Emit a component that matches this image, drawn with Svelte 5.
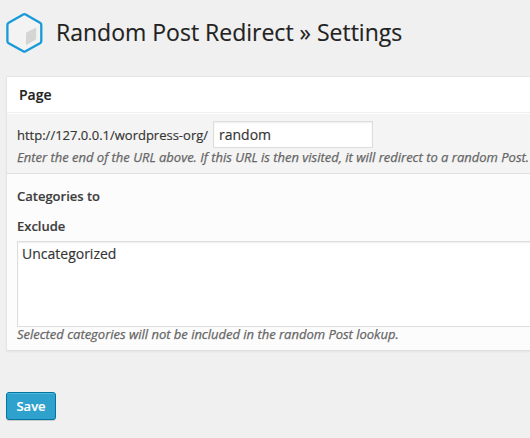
<script>
  let slug = $state('random');
  const categories = ['Uncategorized'];
</script>

<main>
  <header>
    <svg class="logo" width="38" height="42" viewBox="0 0 38 42" aria-hidden="true">
      <path d="M17.2 2.5 Q18.4 1.8 19.6 2.5 L34 10.8 Q35.3 11.5 35.3 13 V29 Q35.3 30.5 34 31.2 L19.6 39.3 Q18.4 40 17.2 39.3 L2.7 31.2 Q1.4 30.5 1.4 29 V13 Q1.4 11.5 2.7 10.8 Z" fill="#f3f3f3" stroke="#1899d9" stroke-width="2.3" />
      <path d="M30.2 15.6 V27.2 L20 33.2 V21.5 Q20 20.7 20.8 20.3 Z" fill="#d5d5d4" />
    </svg>
    <h1>Random Post Redirect » Settings</h1>
  </header>

  <section class="postbox">
    <h2>Page</h2>
    <div class="row url-row">
      <div class="field">
        <span class="url">http://127.0.0.1/wordpress-org/</span>
        <input type="text" bind:value={slug} spellcheck="false" />
      </div>
      <p class="description">Enter the end of the URL above. If this URL is then visited, it will redirect to a random Post.</p>
    </div>
    <div class="row cat-row">
      <div class="label"><span>Categories to</span><span>Exclude</span></div>
      <div class="list" role="listbox">
        {#each categories as category}
          <div role="option" aria-selected="false">{category}</div>
        {/each}
      </div>
      <p class="description hint">Selected categories will not be included in the random Post lookup.</p>
    </div>
  </section>

  <button type="button"><span>Save</span></button>
</main>

<style>
  :global(body) {
    margin: 0;
    background: #f0f0f0;
  }
  main {
    box-sizing: border-box;
    width: 530px;
    height: 438px;
    padding: 12px 0 0 6px;
    overflow: hidden;
    background: #f0f0f0;
    color: #333;
    font: 13px/18px "Open Sans", sans-serif;
    white-space: nowrap;
    -webkit-text-stroke: 0.15px currentColor;
  }
  header {
    display: flex;
    height: 64px;
  }
  .logo {
    flex: none;
  }
  h1 {
    margin: 4px 0 0 12px;
    color: #222;
    font-size: 23px;
    font-weight: 400;
    line-height: 32px;
  }
  .postbox {
    box-sizing: border-box;
    width: 540px;
    height: 275px;
    border: 1px solid #e5e5e5;
    border-bottom-color: #dfdfdf;
    background: #fcfcfc;
    box-shadow: 0 1px 2px rgba(0, 0, 0, 0.05);
  }
  h2 {
    box-sizing: border-box;
    height: 36px;
    margin: 0;
    padding: 8px 12px;
    border-bottom: 1px solid #eee;
    background: #fff;
    color: #222;
    font-size: 14px;
    font-weight: 600;
    line-height: 20px;
  }
  .row {
    box-sizing: border-box;
    padding-left: 10px;
  }
  .url-row {
    height: 61px;
    padding-top: 7px;
    border-top: 1px solid #fff;
    border-bottom: 1px solid #dfdfdf;
    background: #f4f4f4;
  }
  .field {
    display: flex;
    height: 27px;
    align-items: center;
  }
  .url {
    width: 196px;
    flex: none;
  }
  input {
    box-sizing: border-box;
    width: 160px;
    height: 27px;
    margin: 0;
    padding: 0 5px;
    border: 1px solid #ddd;
    border-radius: 0;
    outline: 0;
    background: #fff;
    box-shadow: inset 0 1px 2px rgba(0, 0, 0, 0.07);
    color: #333;
    font: 14px/20px "Open Sans", sans-serif;
  }
  .description {
    margin: 0;
    color: #666;
    font-style: italic;
    letter-spacing: -0.008px;
    -webkit-text-stroke-width: 0.25px;
  }
  .hint {
    line-height: 14px;
    letter-spacing: -0.015px;
  }
  .cat-row {
    padding-top: 7px;
  }
  .label {
    display: flex;
    flex-direction: column;
    height: 60px;
    color: #3c3c3c;
    font-weight: 600;
    line-height: 30px;
  }
  .list {
    box-sizing: border-box;
    height: 86px;
    padding: 2px 4px;
    border: 1px solid #ddd;
    background: #fff;
    box-shadow: inset 0 1px 2px rgba(0, 0, 0, 0.07);
    color: #333;
    font-size: 14px;
    line-height: 20px;
  }
  button {
    box-sizing: border-box;
    display: block;
    width: 50px;
    height: 28px;
    margin: 41px 0 0;
    padding: 0;
    border: 1px solid #0074a2;
    border-radius: 3px;
    background: #2ea2cc;
    box-shadow: inset 0 1px 0 rgba(120, 200, 230, 0.5), 0 1px 0 rgba(0, 0, 0, 0.15);
    color: #fff;
    font: 600 13px/26px "Open Sans", sans-serif;
  }
</style>
